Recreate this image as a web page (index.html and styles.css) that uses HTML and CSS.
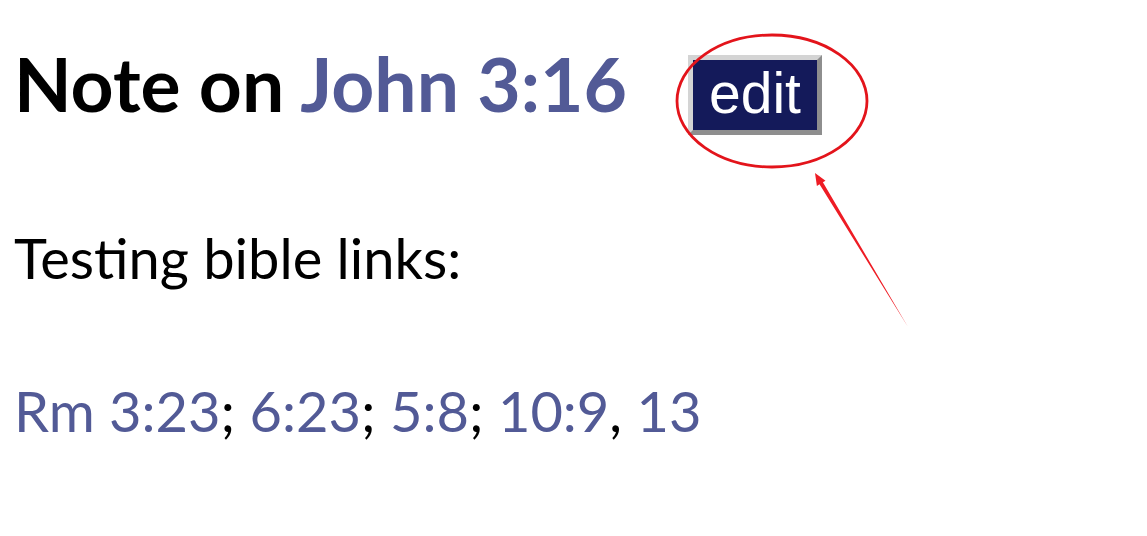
FILE: index.html
```html
<!DOCTYPE html>
<html>
<head>
<meta charset="utf-8">
<link rel="stylesheet" href="styles.css">
</head>
<body>
<div class="page">
  <div class="title-row">
    <h1 class="title">Note on <a class="ref">John 3:16</a></h1>
    <span class="edit-btn">edit</span>
  </div>
  <p class="intro">Testing bible links:</p>
  <p class="links"><a class="ref">Rm 3:23</a>; <a class="ref">6:23</a>; <a class="ref">5:8</a>; <a class="ref">10:9</a>, <a class="ref">13</a></p>
</div>
<svg class="annot" width="1147" height="536" viewBox="0 0 1147 536">
  <ellipse cx="772" cy="101" rx="95" ry="66" fill="none" stroke="#e3141b" stroke-width="2.8"/>
  <polygon points="815,173 825.5,180.7 822.9,182.3 908,327 819.5,184.3 816.9,185.9" fill="#ee1c24"/>
</svg>
</body>
</html>
```
FILE: styles.css
```css
html, body { margin: 0; padding: 0; background: #fff; }
body { width: 1147px; height: 536px; overflow: hidden; position: relative; }
.page { padding: 46px 0 0 14px; font-family: Lato, "Open Sans", sans-serif; }
.title-row { display: flex; align-items: flex-start; gap: 61px; }
.title { margin: 0; font-size: 75px; font-weight: 700; color: #000; line-height: 1; white-space: nowrap; }
.ref { color: #525a96; text-decoration: none; }
.edit-btn {
  display: inline-block;
  margin-top: 9px;
  background: #141a5a;
  color: #fff;
  font-family: "Liberation Sans", Arial, sans-serif;
  font-size: 57px;
  line-height: 1;
  padding: 5px 16px 8px 16px;
  border: 5px solid;
  border-color: #d4d4d4 #8e8e8e #8e8e8e #d4d4d4;
}
.intro { margin: 95px 0 0; font-size: 56px; line-height: 1; color: #000; }
.links { margin: 97px 0 0; font-size: 56px; line-height: 1; color: #000; }
.annot { position: absolute; left: 0; top: 0; pointer-events: none; }
```
